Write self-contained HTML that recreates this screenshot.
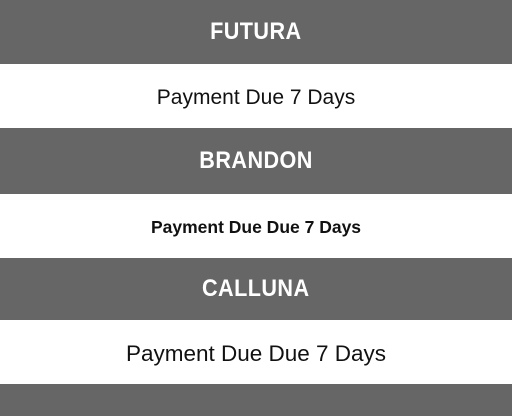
<!DOCTYPE html>
<html><head><style>
html,body{margin:0;padding:0;width:512px;height:416px;overflow:hidden;background:#666;}
.b{position:absolute;left:0;width:512px;display:flex;align-items:center;justify-content:center;box-sizing:border-box;}
.g{background:#666;color:#fff;font-family:"Liberation Sans",sans-serif;font-weight:bold;font-size:24px;letter-spacing:0.5px;}
.g span{display:inline-block;transform:scaleX(0.9);}
.w{background:#fff;color:#111;padding-top:3px;}
</style></head><body>
<div class="b g" style="top:0;height:64px;"><span>FUTURA</span></div>
<div class="b w" style="top:64px;height:64px;font-family:'Liberation Sans',sans-serif;font-size:21px;">Payment Due 7 Days</div>
<div class="b g" style="top:128px;height:66px;"><span>BRANDON</span></div>
<div class="b w" style="top:194px;height:64px;font-family:'Liberation Sans',sans-serif;font-weight:bold;font-size:17.5px;">Payment Due Due 7 Days</div>
<div class="b g" style="top:258px;height:62px;"><span>CALLUNA</span></div>
<div class="b w" style="top:320px;height:64px;font-family:'Liberation Sans',sans-serif;font-size:22.5px;">Payment Due Due 7 Days</div>
</body></html>
